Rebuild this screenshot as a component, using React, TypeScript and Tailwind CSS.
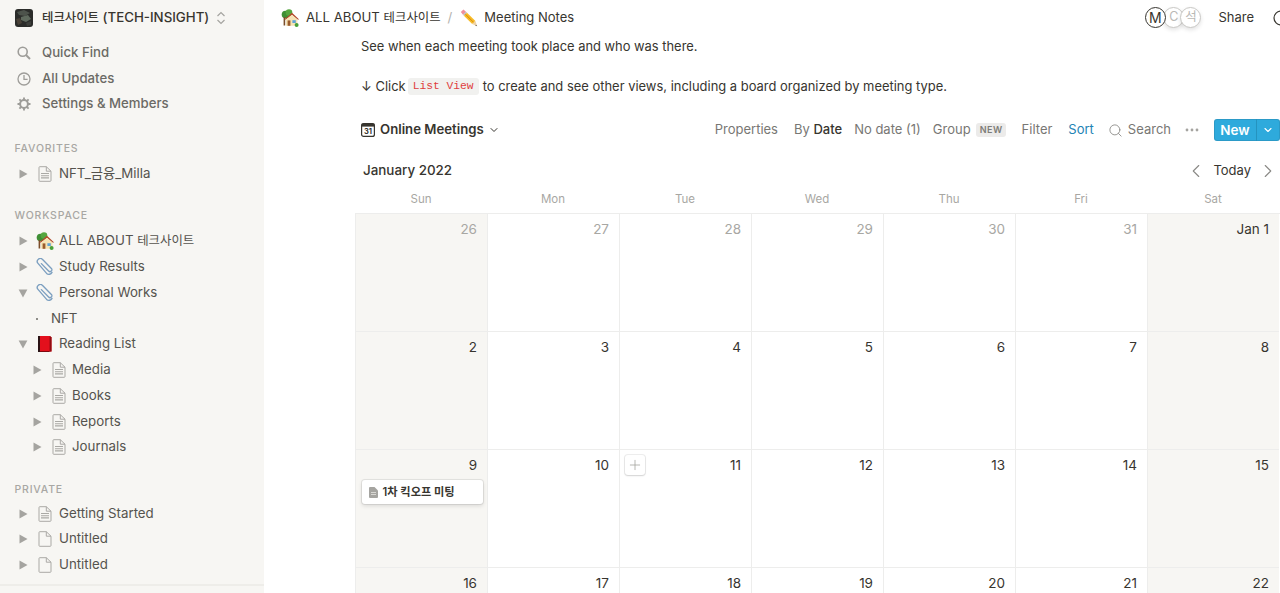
import React from "react";
import { ChevronDown, ChevronLeft, ChevronRight, Plus, Search } from "lucide-react";

const F = { fontFamily: "Inter, 'Noto Sans CJK KR', sans-serif" };

const Ko = ({ children }: { children: React.ReactNode }) => <span className="text-[12.4px]">{children}</span>;

const Tri = ({ open }: { open?: boolean }) => (
  <svg width="10" height="10" viewBox="0 0 10 10" className="shrink-0">
    {open ? <path d="M.6 1.5 L9.4 1.5 L5 9.5 Z" fill="#a5a4a0" /> : <path d="M1.5 .6 L9.5 5 L1.5 9.4 Z" fill="#a5a4a0" />}
  </svg>
);

const Page = ({ lines = true }: { lines?: boolean }) => (
  <svg width="14" height="16" viewBox="0 0 14 16" fill="none" className="shrink-0">
    <path d="M1 1.5 Q1 .7 1.8 .7 H8.3 L13 5.2 V14.5 Q13 15.3 12.2 15.3 H1.8 Q1 15.3 1 14.5 Z" stroke="#aaa9a5" strokeWidth="1" fill="#f7f6f3" />
    <path d="M8.3 .7 V5.2 H13" stroke="#aaa9a5" strokeWidth="1" />
    {lines && <path d="M3 7.5 H11 M3 9.7 H11 M3 11.9 H11" stroke="#aaa9a5" strokeWidth="1.1" />}
  </svg>
);

const House = () => (
  <svg width="19" height="18" viewBox="0 0 19 18" className="shrink-0">
    <circle cx="4.5" cy="5.5" r="3.8" fill="#3f8f35" />
    <circle cx="8" cy="3.6" r="3.3" fill="#55a63f" />
    <rect x="2.6" y="8" width="1.6" height="8.5" fill="#7a4e2a" />
    <path d="M3.2 10.6 L11 3.8 L18.2 10.6 L16.6 10.6 L11 6 L4.9 10.6 Z" fill="#b04a2a" />
    <path d="M5 10.4 L11 5.8 L16.4 10.4 V16.8 H5 Z" fill="#f6e3b5" />
    <rect x="6.6" y="11.4" width="2.8" height="5.4" fill="#9a5a2c" />
    <rect x="11.4" y="11.2" width="3.4" height="2.8" fill="#5fa3d6" />
    <circle cx="15.6" cy="16" r="2" fill="#48a038" />
  </svg>
);

const Clip = () => (
  <svg width="18" height="18" viewBox="0 0 18 18" fill="none" className="shrink-0">
    <path
      d="M5.4 5.6 L12.6 13 a1.9 1.9 0 0 0 2.8 -2.6 L6.6 1.6 a2.9 2.9 0 0 0 -4.6 3.8 L10.6 15.4 a3.4 3.4 0 0 0 5.4 -1"
      stroke="#7c9fc0"
      strokeWidth="1.35"
      strokeLinecap="round"
    />
  </svg>
);

const Book = () => (
  <svg width="16" height="18" viewBox="0 0 16 18" className="shrink-0">
    <path d="M1 1 H3 V17 H1 Z" fill="#2a1214" />
    <path d="M3 1 H13 L14.5 2.6 V16.5 L3 17 Z" fill="#e3101c" />
    <path d="M13 1 L14.5 2.6 V16.5 L12.6 16.6 V2 Z" fill="#8f0c12" />
    <path d="M3 16 H12.6 V17 H3 Z" fill="#7d0a10" />
  </svg>
);

const Pencil = () => (
  <svg width="18" height="18" viewBox="0 0 18 18" className="shrink-0">
    <path d="M.8 3 L3.4 .5 L6 2.8 L3 5.8 Z" fill="#ef8f9c" />
    <path d="M3 5.8 L6 2.8 L7 3.7 L3.9 6.7 Z" fill="#b9b9b9" />
    <path d="M3.9 6.7 L7 3.7 L15.4 12 L12.2 15.1 Z" fill="#f7bb26" />
    <path d="M5.4 5.2 L13.8 13.6" stroke="#d68a12" strokeWidth="1" />
    <path d="M12.2 15.1 L15.4 12 L17.2 17.2 Z" fill="#f0d3a4" />
    <path d="M16 15.8 L17.2 17.2 L15.3 16.6 Z" fill="#333" />
  </svg>
);

const WorkspaceIcon = () => (
  <svg width="18" height="18" viewBox="0 0 18 18" className="shrink-0">
    <rect width="18" height="18" rx="3" fill="#2b2c2a" />
    <path d="M2 3 L9 1 L15 4 L10 7 L4 6 Z" fill="#4d534c" />
    <path d="M6 8 L13 6 L16 10 L11 13 L6 11 Z" fill="#5f6a5e" />
    <path d="M1 10 L5 9 L7 14 L3 16 Z" fill="#4a4238" />
    <path d="M11 14 L16 12 L16 16 L12 17 Z" fill="#3d3f3b" />
  </svg>
);

type Row = { t: React.ReactNode; icon: React.ReactNode; open?: boolean; indent?: boolean };
const P = <Page />;
const favorites: Row[] = [{ t: "NFT_금융_Milla", icon: P }];
const privateRows: Row[] = [
  { t: "Getting Started", icon: P },
  { t: "Untitled", icon: <Page lines={false} /> },
  { t: "Untitled", icon: <Page lines={false} /> },
];

const SideRow = ({ t, icon, open, indent }: Row) => (
  <div className={`flex h-[25.75px] items-center text-[13.3px] text-[#55534e] ${indent ? "pl-[32px]" : "pl-[18px]"}`}>
    <Tri open={open} />
    <span className="ml-[10px] flex w-[14px] justify-center">{icon}</span>
    <span className={`whitespace-nowrap ${indent ? "ml-[6px]" : "ml-[7px]"}`}>{t}</span>
  </div>
);

const Label = ({ t, cls }: { t: string; cls: string }) => (
  <div className={`pl-[14.5px] text-[10.5px] font-medium leading-[20px] tracking-[0.8px] text-[#a8a7a3] ${cls}`}>{t}</div>
);

const Sidebar = () => (
  <aside className="flex h-[593px] w-[264px] shrink-0 flex-col bg-[#f7f6f3]">
    <div className="flex h-[36px] shrink-0 items-center pl-[15px]">
      <WorkspaceIcon />
      <span className="ml-[9px] whitespace-nowrap text-[13.3px] font-medium text-[#37352f]"><Ko>테크사이트</Ko> (TECH-INSIGHT)</span>
      <svg width="10" height="14" viewBox="0 0 10 14" fill="none" className="ml-[7px]">
        <path d="M1.5 5 L5 1.5 L8.5 5 M1.5 9 L5 12.5 L8.5 9" stroke="#a5a4a0" strokeWidth="1.2" />
      </svg>
    </div>
    <nav className="mt-[4px] text-[13.2px] font-medium text-[#6b6a65]">
      <div className="flex h-[25.75px] items-center pl-[17px]">
        <svg width="14" height="14" viewBox="0 0 14 14" fill="none">
          <circle cx="5.7" cy="5.7" r="4.5" stroke="#9e9d99" strokeWidth="1.6" />
          <path d="M9 9 L13 13" stroke="#9e9d99" strokeWidth="1.9" />
        </svg>
        <span className="ml-[11px]">Quick Find</span>
      </div>
      <div className="flex h-[25.75px] items-center pl-[17px]">
        <svg width="14" height="14" viewBox="0 0 14 14" fill="none">
          <circle cx="7" cy="7" r="6" stroke="#9e9d99" strokeWidth="1.3" />
          <path d="M7 3 V7.4 H10.6" stroke="#9e9d99" strokeWidth="1.3" />
        </svg>
        <span className="ml-[11px]">All Updates</span>
      </div>
      <div className="flex h-[25.75px] items-center pl-[17px]">
        <svg width="14" height="14" viewBox="0 0 14 14" fill="none">
          <circle cx="7" cy="7" r="3.9" stroke="#9e9d99" strokeWidth="2" />
          <path d="M7 .5 V3 M7 11 V13.5 M.5 7 H3 M11 7 H13.5 M2.4 2.4 L4.2 4.2 M9.8 9.8 L11.6 11.6 M2.4 11.6 L4.2 9.8 M9.8 4.2 L11.6 2.4" stroke="#9e9d99" strokeWidth="1.9" />
        </svg>
        <span className="ml-[11px]">Settings &amp; Members</span>
      </div>
    </nav>
    <Label t="FAVORITES" cls="mt-[22px] mb-[2px]" />
    {favorites.map((r, i) => <SideRow key={i} {...r} />)}
    <Label t="WORKSPACE" cls="mt-[19px] mb-[2.5px]" />
    <SideRow t={<>ALL ABOUT <Ko>테크사이트</Ko></>} icon={<House />} />
    <SideRow t="Study Results" icon={<Clip />} />
    <SideRow t="Personal Works" icon={<Clip />} open />
    <div className="flex h-[25.75px] items-center pl-[36px] text-[13.3px] text-[#55534e]">
      <span className="h-[2px] w-[2px] rounded-full bg-[#6b6a65]" />
      <span className="ml-[13px]">NFT</span>
    </div>
    <SideRow t="Reading List" icon={<Book />} open />
    <SideRow t="Media" icon={P} indent />
    <SideRow t="Books" icon={P} indent />
    <SideRow t="Reports" icon={P} indent />
    <SideRow t="Journals" icon={P} indent />
    <Label t="PRIVATE" cls="mt-[20px] mb-[0.5px]" />
    {privateRows.map((r, i) => <SideRow key={i} {...r} />)}
    <div className="mt-[6px] h-[2px] bg-[#eeede9]" />
  </aside>
);

const Avatar = ({ t, dark, cls }: { t: string; dark?: boolean; cls?: string }) => (
  <div
    className={`flex h-[21px] w-[21px] shrink-0 items-center justify-center rounded-full bg-white ${
      dark
        ? "relative z-10 border-[1.5px] border-[#37352f] text-[14px] text-[#37352f]"
        : "border border-[#c9c8c5] text-[12.5px] text-[#b9b8b5] shadow-[0_2px_4px_rgba(15,15,15,0.12)]"
    } ${cls ?? ""}`}
  >
    {t}
  </div>
);

const TopBar = () => (
  <div className="flex h-[35px] shrink-0 items-center pl-[17px] text-[13.2px] text-[#37352f]">
    <House />
    <span className="ml-[6px] whitespace-nowrap">ALL ABOUT <Ko>테크사이트</Ko></span>
    <span className="ml-[7px] text-[#b4b3af]">/</span>
    <span className="ml-[8px]"><Pencil /></span>
    <span className="ml-[6px] whitespace-nowrap text-[13px]">Meeting Notes</span>
    <div className="ml-auto flex items-center">
      <Avatar t="M" dark />
      <Avatar t="C" cls="-ml-[2.5px]" />
      <Avatar t="석" cls="-ml-[4px]" />
      <span className="ml-[17px] text-[13px]">Share</span>
      <svg width="16" height="16" viewBox="0 0 16 16" fill="none" className="ml-[19px] -mr-[9px] shrink-0">
        <circle cx="8" cy="8" r="7" stroke="#37352f" strokeWidth="1.2" />
        <path d="M8 3.5 V8.4 H12" stroke="#37352f" strokeWidth="1.2" />
      </svg>
    </div>
  </div>
);

const Toolbar = () => (
  <div className="flex h-[22px] items-center text-[13px] text-[#787774]">
    <div className="flex items-center pl-[6px] text-[#37352f]">
      <svg width="14" height="14" viewBox="0 0 14 14" className="shrink-0">
        <rect x=".6" y=".6" width="12.8" height="12.8" rx="2" fill="none" stroke="#37352f" strokeWidth="1.2" />
        <rect x=".6" y=".6" width="12.8" height="3" fill="#37352f" />
        <text x="7" y="11.4" textAnchor="middle" fontSize="7.5" fontWeight="700" fill="#37352f">31</text>
      </svg>
      <span className="ml-[5px] whitespace-nowrap text-[13.2px] font-semibold">Online Meetings</span>
      <ChevronDown size={12} strokeWidth={2} className="ml-[4px]" />
    </div>
    <span className="ml-auto whitespace-nowrap">Properties</span>
    <span className="ml-[16px] whitespace-nowrap">By <span className="font-medium text-[#37352f]">Date</span></span>
    <span className="ml-[12px] whitespace-nowrap">No date (1)</span>
    <span className="ml-[12px]">Group</span>
    <span className="ml-[5.5px] rounded-[3px] bg-[#ecebea] px-[3.5px] text-[9px] font-semibold leading-[14px] tracking-[0.5px] text-[#7d7c78]">NEW</span>
    <span className="ml-[15.5px]">Filter</span>
    <span className="ml-[16px] text-[#2383b5]">Sort</span>
    <Search size={15} strokeWidth={1.4} className="ml-[14px] text-[#8a8986]" />
    <span className="ml-[5px]">Search</span>
    <svg width="14" height="4" viewBox="0 0 14 4" className="ml-[14px]">
      <circle cx="2" cy="2" r="1.4" fill="#a5a4a0" />
      <circle cx="7" cy="2" r="1.4" fill="#a5a4a0" />
      <circle cx="12" cy="2" r="1.4" fill="#a5a4a0" />
    </svg>
    <div className="ml-[15px] flex h-[22px] w-[66px] shrink-0 items-center rounded-[3px] bg-[#2eaadc] text-white shadow-[inset_0_0_0_1px_rgba(15,15,15,0.1)]">
      <span className="w-[42px] text-center text-[13.5px] font-semibold">New</span>
      <span className="h-full w-px bg-[#2593bf]" />
      <ChevronDown size={12} strokeWidth={2.2} className="ml-[5px]" />
    </div>
  </div>
);

const days = ["Sun", "Mon", "Tue", "Wed", "Thu", "Fri", "Sat"];
const weeks = [
  ["26", "27", "28", "29", "30", "31", "Jan 1"],
  ["2", "3", "4", "5", "6", "7", "8"],
  ["9", "10", "11", "12", "13", "14", "15"],
  ["16", "17", "18", "19", "20", "21", "22"],
];

const Calendar = () => (
  <div className="w-[925px]">
    <div className="flex h-[33px] items-center pl-[8px] pr-[1px] pt-[2px] text-[#37352f]">
      <span className="text-[13.4px] font-medium">January 2022</span>
      <div className="ml-auto flex items-center text-[13px]">
        <ChevronLeft size={22} strokeWidth={1.2} className="text-[#8a8986]" />
        <span className="mx-[6px]">Today</span>
        <ChevronRight size={22} strokeWidth={1.2} className="text-[#8a8986]" />
      </div>
    </div>
    <div className="grid h-[27px] grid-cols-[repeat(7,132px)] items-center text-center text-[11.5px] text-[#a8a7a3]">
      {days.map((d) => <span key={d}>{d}</span>)}
    </div>
    <div className="grid grid-cols-[repeat(7,132px)] border-t border-[#ededec]">
      {weeks.flatMap((w, wi) =>
        w.map((d, di) => {
          const weekend = di === 0 || di === 6;
          const dim = wi === 0 && di < 6;
          return (
            <div
              key={d + wi}
              className={`relative h-[118px] border-b border-l border-[#ededec] pr-[10px] pt-[6px] text-right text-[13.5px] leading-[18px] ${
                weekend ? "bg-[#f7f6f3]" : "bg-white"
              } ${dim ? "text-[#a8a7a3]" : "text-[#37352f]"}`}
            >
              {d}
              {d === "11" && (
                <div className="absolute left-[5px] top-[5px] flex h-[20px] w-[20px] items-center justify-center rounded-[3px] bg-white text-[#a5a4a0] shadow-[0_0_0_1px_rgba(15,15,15,0.07),0_1px_2px_rgba(15,15,15,0.12)]">
                  <Plus size={16} strokeWidth={1.2} />
                </div>
              )}
              {d === "9" && (
                <div className="absolute left-[6px] top-[30px] flex h-[24px] w-[121px] items-center rounded-[3px] bg-white pl-[6.5px] text-left shadow-[0_0_0_1px_rgba(15,15,15,0.08),0_2px_4px_rgba(15,15,15,0.12)]">
                  <svg width="9" height="11" viewBox="0 0 9 11" className="shrink-0">
                    <path d="M0 1 Q0 0 1 0 H5.5 L9 3.5 V10 Q9 11 8 11 H1 Q0 11 0 10 Z" fill="#a5a4a0" />
                    <path d="M2 5.5 H7 M2 7.5 H7" stroke="#e5e4e0" strokeWidth=".8" />
                  </svg>
                  <span className="ml-[5px] whitespace-nowrap text-[11.2px] font-semibold text-[#37352f]">1차 킥오프 미팅</span>
                </div>
              )}
            </div>
          );
        })
      )}
    </div>
  </div>
);

export default function App() {
  return (
    <div className="flex h-[593px] w-[1280px] overflow-hidden bg-white" style={F}>
      <Sidebar />
      <main className="flex min-w-0 flex-1 flex-col">
        <TopBar />
        <div className="pl-[91px] pt-[2px] text-[#37352f]">
          <p className="h-[20px] pl-[6px] text-[12.9px] leading-[20px]">See when each meeting took place and who was there.</p>
          <p className="mt-[19px] flex h-[20px] items-center whitespace-pre pl-[6px] text-[12.95px] leading-[20px]">
            <span>↓ Click</span>
            <span className="ml-[2px] mr-[4px] rounded-[3px] bg-[#f1f1ef] px-[5px] font-['Liberation_Mono',monospace] text-[11.3px] leading-[17px] text-[#e03e3e]">List View</span>
            <span>to create and see other views, including a board organized by meeting type.</span>
          </p>
          <div className="mt-[23px]"><Toolbar /></div>
          <div className="mt-[12px]"><Calendar /></div>
        </div>
      </main>
    </div>
  );
}
